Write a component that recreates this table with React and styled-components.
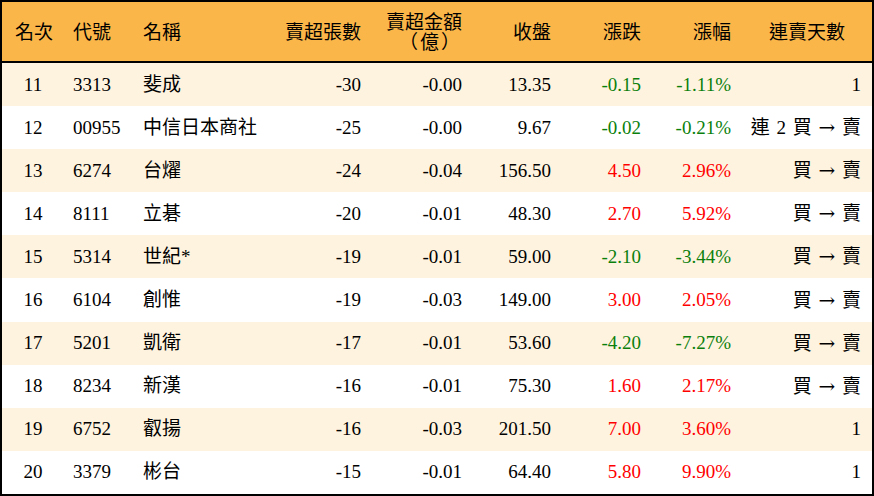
import React from 'react';
import styled, { createGlobalStyle } from 'styled-components';

const GlobalStyle = createGlobalStyle`
  html, body {
    margin: 0;
    padding: 0;
    background: #ffffff;
  }
  body {
    font-family: 'Liberation Serif', 'Noto Sans CJK TC', serif;
  }
`;

const columns = [
  { key: 'rank', title: '名次', width: 62, align: 'center' },
  { key: 'code', title: '代號', width: 70, align: 'left' },
  { key: 'name', title: '名稱', width: 146, align: 'left' },
  { key: 'lots', title: '賣超張數', width: 90, align: 'right' },
  { key: 'amount', title: ['賣超金額', '（億）'], width: 101, align: 'right' },
  { key: 'close', title: '收盤', width: 89, align: 'right' },
  { key: 'change', title: '漲跌', width: 90, align: 'right', colored: true },
  { key: 'pct', title: '漲幅', width: 90, align: 'right', colored: true },
  { key: 'days', title: '連賣天數', width: 132, align: 'right', headAlign: 'center', pad: 11 },
];

const rows = [
  ['11', '3313', '斐成', '-30', '-0.00', '13.35', '-0.15', '-1.11%', '1'],
  ['12', '00955', '中信日本商社', '-25', '-0.00', '9.67', '-0.02', '-0.21%', '連 2 買 → 賣'],
  ['13', '6274', '台燿', '-24', '-0.04', '156.50', '4.50', '2.96%', '買 → 賣'],
  ['14', '8111', '立碁', '-20', '-0.01', '48.30', '2.70', '5.92%', '買 → 賣'],
  ['15', '5314', '世紀*', '-19', '-0.01', '59.00', '-2.10', '-3.44%', '買 → 賣'],
  ['16', '6104', '創惟', '-19', '-0.03', '149.00', '3.00', '2.05%', '買 → 賣'],
  ['17', '5201', '凱衛', '-17', '-0.01', '53.60', '-4.20', '-7.27%', '買 → 賣'],
  ['18', '8234', '新漢', '-16', '-0.01', '75.30', '1.60', '2.17%', '買 → 賣'],
  ['19', '6752', '叡揚', '-16', '-0.03', '201.50', '7.00', '3.60%', '1'],
  ['20', '3379', '彬台', '-15', '-0.01', '64.40', '5.80', '9.90%', '1'],
];

const gridTemplate = columns.map((c) => `${c.width}px`).join(' ');

const Table = styled.div`
  width: 874px;
  height: 496px;
  box-sizing: border-box;
  border: 2px solid #000;
  display: flex;
  flex-direction: column;
  font-size: 19px;
  color: #000;
`;

const HeadRow = styled.div`
  display: grid;
  grid-template-columns: ${gridTemplate};
  height: 59px;
  flex: none;
  background: #fbb649;
  border-bottom: 2px solid #000;
`;

const BodyRow = styled.div`
  display: grid;
  grid-template-columns: ${gridTemplate};
  flex: 1;
  background: ${(p) => (p.$odd ? '#fef3df' : '#ffffff')};
`;

const Cell = styled.div`
  display: flex;
  flex-direction: column;
  justify-content: center;
  align-items: ${(p) =>
    p.$align === 'left' ? 'flex-start' : p.$align === 'right' ? 'flex-end' : 'center'};
  padding: 0 ${(p) => p.$pad ?? 9}px 0 9px;
  line-height: 20px;
  white-space: nowrap;
  word-spacing: 2px;
  color: ${(p) => p.$color || '#000'};
`;

const HeadCell = styled(Cell)`
  padding: ${(p) => (p.$align === 'center' ? '3px 0 0 2px' : '3px 9px 0')};
`;

const HeadLine = styled.span`
  letter-spacing: ${(p) => (p.$wide ? '2px' : '0')};
`;

const Arrow = styled.span`
  font-family: 'DejaVu Serif', serif;
  font-size: 20px;
  line-height: 20px;
`;

const colorFor = (value) => (value.startsWith('-') ? '#0b7f0b' : '#ff0000');

const renderValue = (value) => {
  if (!value.includes('→')) return value;
  const [before, after] = value.split('→');
  return (
    <span>
      {before}
      <Arrow>→</Arrow>
      {after}
    </span>
  );
};

export default function App() {
  return (
    <>
      <GlobalStyle />
      <Table>
        <HeadRow>
          {columns.map((c) => (
            <HeadCell key={c.key} $align={c.headAlign || c.align}>
              {Array.isArray(c.title)
                ? c.title.map((t, k) => (
                    <HeadLine key={t} $wide={k === 1}>
                      {t}
                    </HeadLine>
                  ))
                : c.title}
            </HeadCell>
          ))}
        </HeadRow>
        {rows.map((r, i) => (
          <BodyRow key={r[0]} $odd={i % 2 === 0}>
            {columns.map((c, j) => (
              <Cell
                key={c.key}
                $align={c.align}
                $pad={c.pad}
                $color={c.colored ? colorFor(r[j]) : undefined}
              >
                {renderValue(r[j])}
              </Cell>
            ))}
          </BodyRow>
        ))}
      </Table>
    </>
  );
}
